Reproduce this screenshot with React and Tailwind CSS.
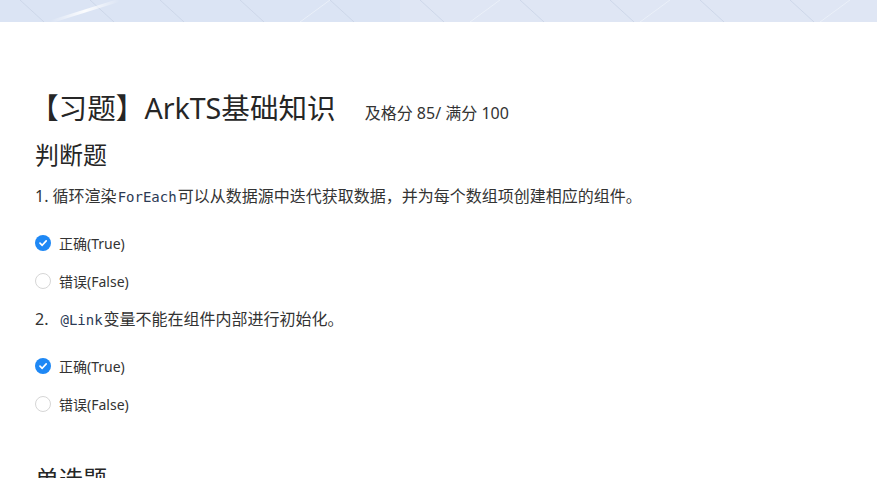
import React from 'react';

const font = { fontFamily: '"Noto Sans", "Noto Sans CJK SC", sans-serif' };

const questions = [
  {
    no: '1. ',
    before: '循环渲染',
    code: 'ForEach',
    after: '可以从数据源中迭代获取数据，并为每个数组项创建相应的组件。',
    spaced: false,
  },
  {
    no: '2.',
    before: '',
    code: '@Link',
    after: '变量不能在组件内部进行初始化。',
    spaced: true,
  },
];

const Radio = ({ checked, label }) => (
  <div className="flex items-center h-6 gap-2">
    {checked ? (
      <span className="w-4 h-4 rounded-full bg-[#1e88f5] flex items-center justify-center">
        <svg width="10" height="10" viewBox="0 0 10 10">
          <path d="M2 5.2 L4.2 7.3 L8.2 2.9" fill="none" stroke="white" strokeWidth="1.7" strokeLinecap="round" strokeLinejoin="round" />
        </svg>
      </span>
    ) : (
      <span className="w-4 h-4 rounded-full border border-[#d6d6d6] bg-white" />
    )}
    <span className="text-[14px] text-[#333]">{label}</span>
  </div>
);

const Banner = () => (
  <div className="relative h-[22px] bg-[#dde5f3] overflow-hidden">
    <svg className="absolute inset-0" width="877" height="22" viewBox="0 0 877 22">
      <defs>
        <linearGradient id="glow" x1="0" y1="0" x2="1" y2="0">
          <stop offset="0" stopColor="#ffffff" stopOpacity="0" />
          <stop offset="0.5" stopColor="#ffffff" stopOpacity="0.9" />
          <stop offset="1" stopColor="#ffffff" stopOpacity="0" />
        </linearGradient>
      </defs>
      <rect x="0" y="0" width="877" height="22" fill="#dfe6f4" />
      <rect x="0" y="0" width="400" height="22" fill="#d9e2f3" opacity="0.6" />
      {[20, 90, 160, 240, 330, 420, 520, 610, 700, 790].map((x) => (
        <line key={'a' + x} x1={x} y1="0" x2={x + 24} y2="22" stroke="#c9d3e6" strokeWidth="0.8" />
      ))}
      {[300, 470, 640, 820].map((x) => (
        <line key={'b' + x} x1={x} y1="22" x2={x + 30} y2="0" stroke="#eef2fa" strokeWidth="0.8" />
      ))}
      <line x1="50" y1="22" x2="120" y2="0" stroke="url(#glow)" strokeWidth="3" />
    </svg>
  </div>
);

export default function App() {
  return (
    <div className="min-h-screen bg-white text-[#333]" style={font}>
      <Banner />
      <div className="px-[35px] pt-[66px]">
        <div className="flex items-baseline h-10 -ml-[5px]">
          <h1 className="text-[28.6px] leading-10 text-[#262626]">【习题】ArkTS基础知识</h1>
          <span className="ml-[29px] text-[16px] text-[#333]">及格分 85/ 满分 100</span>
        </div>
        <h2 className="mt-[11px] text-[24px] leading-8 text-[#262626]">判断题</h2>
        {questions.map((q, i) => (
          <div key={i} className={i === 0 ? 'mt-[13px]' : 'mt-[14px]'}>
            <p className="text-[16px] leading-6 text-[#333]">
              {q.no}
              {q.spaced && <span className="inline-block w-[11px]" />}
              {q.before}
              <code
                className="text-[14px] text-[#2b3a55] px-[1px]"
                style={{ fontFamily: '"DejaVu Sans Mono", "Liberation Mono", monospace' }}
              >
                {q.code}
              </code>
              {q.after}
            </p>
            <div className="mt-[22px] flex flex-col gap-[14px]">
              <Radio checked label="正确(True)" />
              <Radio label="错误(False)" />
            </div>
          </div>
        ))}
        <h2 className="mt-[47px] text-[24px] leading-8 text-[#262626]">单选题</h2>
      </div>
    </div>
  );
}
